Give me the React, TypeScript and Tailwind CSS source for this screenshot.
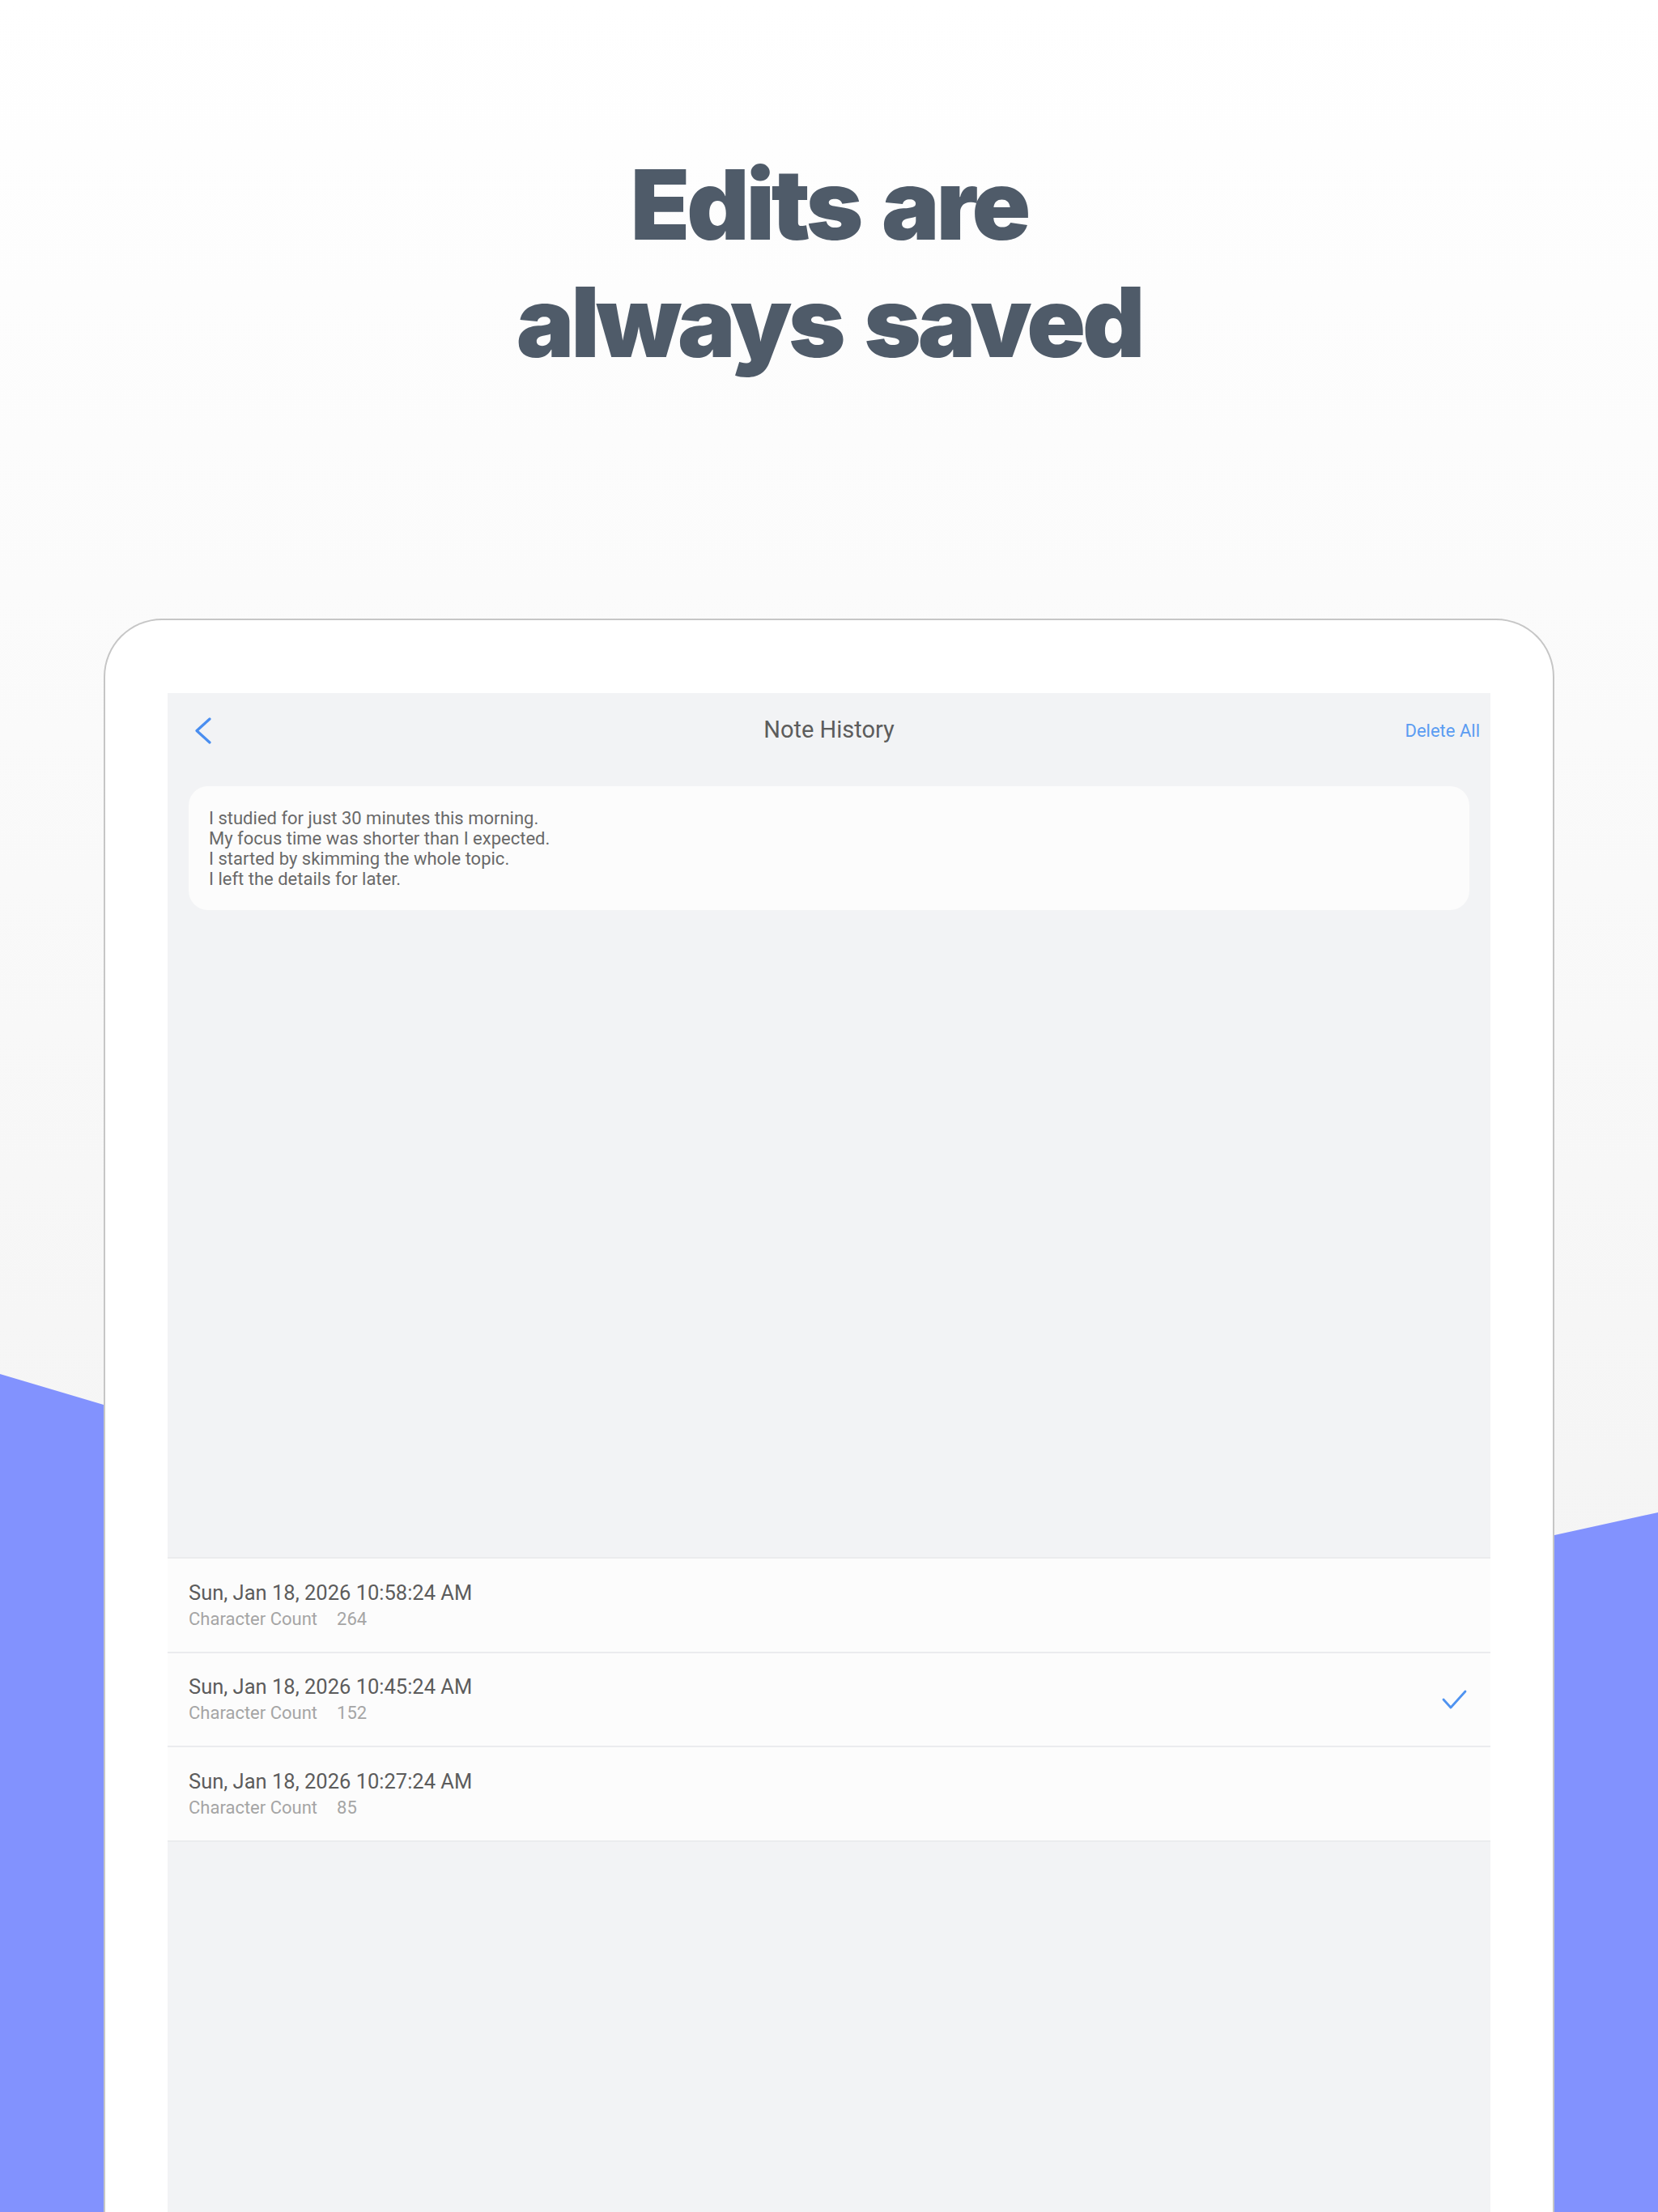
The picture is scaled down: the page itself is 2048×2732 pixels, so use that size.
import React from "react";

const rows = [
  { date: "Sun, Jan 18, 2026 10:58:24 AM", count: 264, selected: false },
  { date: "Sun, Jan 18, 2026 10:45:24 AM", count: 152, selected: true },
  { date: "Sun, Jan 18, 2026 10:27:24 AM", count: 85, selected: false },
];

const noteLines = [
  "I studied for just 30 minutes this morning.",
  "My focus time was shorter than I expected.",
  "I started by skimming the whole topic.",
  "I left the details for later.",
];

function BackChevron() {
  return (
    <svg width="20" height="33" viewBox="0 0 20 33" fill="none">
      <polyline
        points="18,2 2,16.5 18,31"
        stroke="#4a8ef0"
        strokeWidth="3.2"
        strokeLinecap="round"
        strokeLinejoin="round"
      />
    </svg>
  );
}

function Check() {
  return (
    <svg width="31" height="24" viewBox="0 0 31 24" fill="none">
      <polyline
        points="2,12 11,22 29,2"
        stroke="#4f93f0"
        strokeWidth="2.8"
        strokeLinecap="round"
        strokeLinejoin="round"
      />
    </svg>
  );
}

export default function App() {
  return (
    <div className="relative w-[2048px] h-[2732px] overflow-hidden bg-gradient-to-b from-white to-[#f0f0f0]">
      {/* blue backdrop */}
      <svg
        className="absolute inset-0"
        width="2048"
        height="2732"
        viewBox="0 0 2048 2732"
      >
        <polygon points="0,1697 1202,2054 2048,1868 2048,2732 0,2732" fill="#8292fe" />
      </svg>

      <div className="relative flex flex-col items-center">
        {/* Heading */}
        <h1
          className="pt-[180px] text-center text-[120px] leading-[145px] font-black tracking-[-0.035em] [word-spacing:0.06em] text-[#4f5b69]"
          style={{ fontFamily: "Inter, 'Liberation Sans', sans-serif" }}
        >
          Edits are
          <br />
          always saved
        </h1>

        {/* Device */}
        <div className="mt-[294px] w-[1792px] h-[1968px] bg-white border-2 border-b-0 border-[#c6c6c6] rounded-t-[72px] pt-[90px] px-[77px]">
          <div
            className="h-full bg-[#f2f3f5] flex flex-col"
            style={{ fontFamily: "Roboto, 'Noto Sans', sans-serif" }}
          >
            {/* Nav */}
            <div className="h-[92px] grid grid-cols-[1fr_auto_1fr] items-center">
              <div className="pl-[34px] flex items-center">
                <BackChevron />
              </div>
              <div className="text-[29px] text-[#5c5c5c]">Note History</div>
              <div className="flex justify-end pr-[13px] text-[22px] text-[#5b9cf2]">Delete All</div>
            </div>

            {/* Preview */}
            <div className="h-[975px] px-[26px] pt-[23px]">
              <div className="bg-[#fcfcfc] rounded-[24px] h-[153px] px-[25px] flex flex-col justify-center">
                {noteLines.map((l) => (
                  <p key={l} className="text-[22px] leading-[25px] text-[#696969]">
                    {l}
                  </p>
                ))}
              </div>
            </div>

            {/* History list */}
            <div className="flex flex-col">
              {rows.map((r) => (
                <div
                  key={r.date}
                  className="h-[116.5px] bg-[#fcfcfc] border-t-2 border-[#ebecee] pl-[26px] pr-[29px] flex items-center justify-between"
                >
                  <div className="flex flex-col gap-[5px]">
                    <span className="text-[25.5px] leading-[30px] text-[#5c5c5c]">{r.date}</span>
                    <span className="text-[22px] leading-[26px] text-[#a5a5a5]">
                      Character Count<span className="ml-[24px]">{r.count}</span>
                    </span>
                  </div>
                  {r.selected && <Check />}
                </div>
              ))}
              <div className="border-t-2 border-[#ebecee]" />
            </div>
          </div>
        </div>
      </div>
    </div>
  );
}
